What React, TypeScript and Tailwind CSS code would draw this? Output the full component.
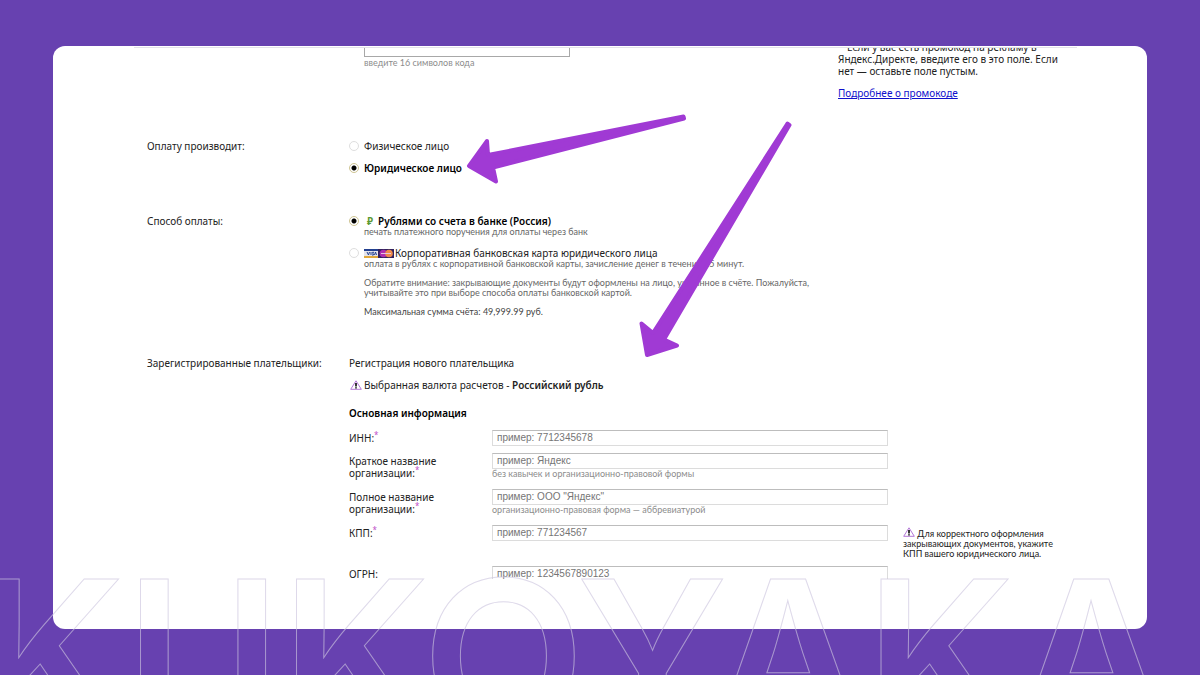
import { ReactNode } from 'react'
import clsx from 'clsx'

type RadioProps = {
    id: string
    name: string
    checked?: boolean
    icon?: ReactNode
    children: ReactNode
}

function RadioOption({ id, name, checked, icon, children }: RadioProps) {
    return (
        <div className="flex h-3 items-center">
            <input
                type="radio"
                id={id}
                name={name}
                defaultChecked={checked}
                className="mr-[5px] size-[10px] shrink-0 appearance-none rounded-full border border-[#dedede] bg-white checked:border-[#cfc593] checked:bg-[radial-gradient(circle,#000_2px,#fff_3px)]"
            />
            <label htmlFor={id} className={clsx('flex items-center whitespace-nowrap', checked && 'font-semibold text-black')}>
                {icon}
                {children}
            </label>
        </div>
    )
}

function WarningIcon() {
    return (
        <svg viewBox="0 0 12 10" className="inline-block h-[10px] w-3 shrink-0 align-baseline" aria-hidden="true">
            <path d="M6 0.8 L11.3 9.3 H0.7 Z" fill="#fff" stroke="#b377d6" strokeLinejoin="round" />
            <path d="M6 3 V6.4 M6 7.2 V8.6" stroke="#222" strokeWidth="1.8" />
        </svg>
    )
}

function BankCards() {
    return (
        <svg viewBox="0 0 30 9" className="mr-[1px] h-[9px] w-[30px] shrink-0" aria-hidden="true">
            <rect width="14" height="9" fill="#e4e4ec" />
            <rect width="14" height="2" fill="#23408f" />
            <rect y="7" width="14" height="2" fill="#e0a83c" />
            <path d="M3 3 L4.5 6 L5.5 3 M7 3 V6 M10 3.3 H8.5 L9.5 6 H8 M10.5 6 L11.5 3 L12.5 6" fill="none" stroke="#23408f" />
            <rect x="14" width="16" height="9" fill="#33235e" />
            <circle cx="19.5" cy="4.5" r="3.8" fill="#b02fb0" />
            <circle cx="25" cy="4.5" r="3.8" fill="#f08b4a" />
            <path d="M17 4.5 H27" stroke="#e8c6dc" />
        </svg>
    )
}

type FieldProps = {
    id: string
    label: ReactNode
    placeholder: string
    hint?: string
    required?: boolean
    className?: string
    children?: ReactNode
}

function Field({ id, label, placeholder, hint, required, className, children }: FieldProps) {
    return (
        <div className={clsx('flex items-start', className)}>
            <label htmlFor={id} className="w-[143px] shrink-0 pt-[2px]">
                {label}
                {required && <sup className="text-[8px] leading-none text-[#c050c8]">*</sup>}
            </label>
            <div className="w-[396px] shrink-0">
                <input
                    id={id}
                    placeholder={placeholder}
                    className="block h-4 w-full border border-[#dcdcdc] border-t-[#bdbdbd] bg-white px-1 pb-[1px] font-['Liberation_Sans',sans-serif] text-[10px] leading-3 placeholder:text-[#757575]"
                />
                {hint && <p className="font-[Lato,sans-serif] text-[9px] leading-[10px] text-[#8c8c8c]">{hint}</p>}
            </div>
            {children}
        </div>
    )
}

function Row({ title, className, children }: { title?: string; className?: string; children: ReactNode }) {
    return (
        <section className={clsx('flex items-start', className)}>
            <h2 className="w-[202px] shrink-0">{title}</h2>
            <div className="min-w-0 flex-1">{children}</div>
        </section>
    )
}

function Arrows() {
    return (
        <svg className="pointer-events-none absolute top-0 left-0 h-[400px] w-[800px]" viewBox="0 0 800 400" aria-hidden="true">
            <g fill="#a03ad4" stroke="#a03ad4" strokeWidth="4" strokeLinejoin="round">
                <path d="M683.5 116.5 L488 155 L487 141 L469 166 L496 181.5 L493 167.5 L684 118.5 Z" />
                <path d="M787.5 123.5 L653 333 L641.5 323.5 L647 355 L677 345.5 L664 339.5 L789.5 125 Z" />
            </g>
        </svg>
    )
}

export default function App() {
    return (
        <div className="relative min-h-screen overflow-hidden bg-[#6741b0] px-[53px] pt-[46px] pb-[46px]">
            <main className="rounded-xl bg-white pt-[1px] pb-[50px] font-['Noto_Sans',sans-serif] text-[10px] leading-3 text-[#222]">
                <div className="ml-[81px] mr-[70px] border-t border-[#e2e2e8]" />
                <div className="h-[531px] overflow-hidden pl-[94px]">
                    <div className="flex h-[92px] items-start overflow-hidden">
                        <div className="-mt-[10px] ml-[217px] w-[474px] shrink-0">
                            <input id="promo" aria-describedby="promo-hint" aria-label="Промокод" className="block h-[19px] w-[206px] border border-[#a8a8a8]" />
                            <p id="promo-hint" className="font-[Lato,sans-serif] text-[9px] leading-3 text-[#8c8c8c]">введите 16 символов кода</p>
                        </div>
                        <aside className="-mt-[7px] shrink-0">
                            <p>
                                <span className="text-[#2433c0]">•</span> &nbsp;Если у вас есть промокод на рекламу в
                                <br />
                                Яндекс.Директе, введите его в это поле. Если
                                <br />
                                нет — оставьте поле пустым.
                            </p>
                            <a href="#promo" className="mt-[10px] inline-block text-[#1010cc] underline">
                                Подробнее о промокоде
                            </a>
                        </aside>
                    </div>

                    <Row title="Оплату производит:">
                        <div className="flex flex-col gap-[10px]">
                            <RadioOption id="person" name="payer">Физическое лицо</RadioOption>
                            <RadioOption id="company" name="payer" checked>Юридическое лицо</RadioOption>
                        </div>
                    </Row>

                    <Row title="Способ оплаты:" className="mt-[41px]">
                        <RadioOption
                            id="bank"
                            name="method"
                            checked
                            icon={<span className="w-[14px] pl-[3px] text-[10px] font-bold text-[#5b9a32]">₽</span>}
                        >
                            Рублями со счета в банке (Россия)
                        </RadioOption>
                        <p className="pl-[15px] font-[Lato,sans-serif] text-[9px] leading-[10px] text-[#666]">печать платежного поручения для оплаты через банк</p>
                        <div className="mt-[10px]">
                            <RadioOption id="card" name="method" icon={<BankCards />}>
                                Корпоративная банковская карта юридического лица
                            </RadioOption>
                        </div>
                        <div className="pl-[15px] font-[Lato,sans-serif] text-[9px] leading-[10px] text-[#666]">
                            <p>оплата в рублях с корпоративной банковской карты, зачисление денег в течение 15 минут.</p>
                            <p className="mt-[9px]">
                                Обратите внимание: закрывающие документы будут оформлены на лицо, указанное в счёте. Пожалуйста,
                                <br />
                                учитывайте это при выборе способа оплаты банковской картой.
                            </p>
                            <p className="mt-[9px] text-[#444]">Максимальная сумма счёта: 49,999.99 руб.</p>
                        </div>
                    </Row>

                    <Row title="Зарегистрированные плательщики:" className="mt-10">
                        <p>Регистрация нового плательщика</p>
                        <p className="mt-[10px] flex items-center pl-[1px]">
                            <WarningIcon />
                            <span className="ml-[2px]">
                                Выбранная валюта расчетов - <b className="font-semibold">Российский рубль</b>
                            </span>
                        </p>
                        <h3 className="mt-4 font-semibold text-black">Основная информация</h3>
                        <form className="mt-[11px]">
                            <Field id="inn" label="ИНН:" placeholder="пример: 7712345678" required />
                            <Field
                                id="short-name"
                                label={<>Краткое название<br />организации:</>}
                                placeholder="пример: Яндекс"
                                hint="без кавычек и организационно-правовой формы"
                                required
                                className="mt-[7px] h-[29px]"
                            />
                            <Field
                                id="full-name"
                                label={<>Полное название<br />организации:</>}
                                placeholder={'пример: ООО "Яндекс"'}
                                hint="организационно-правовая форма — аббревиатурой"
                                required
                                className="mt-[7px] h-[29px]"
                            />
                            <Field id="kpp" label="КПП:" placeholder="пример: 771234567" required className="mt-[7px] h-[34px]">
                                <p className="ml-[15px] pt-[2px] font-[Lato,sans-serif] text-[9px] leading-[10px] whitespace-nowrap">
                                    <WarningIcon /> Для корректного оформления
                                    <br />
                                    закрывающих документов, укажите
                                    <br />
                                    КПП вашего юридического лица.
                                </p>
                            </Field>
                            <Field id="ogrn" label="ОГРН:" placeholder="пример: 1234567890123" className="mt-[7px]" />
                        </form>
                    </Row>
                </div>
            </main>

            <Arrows />

            {/* outlined brand name running off the bottom edge */}
            <div
                aria-hidden="true"
                className="pointer-events-none absolute top-[579px] -left-6 font-[Inter,sans-serif] text-[212px] leading-[154px] font-semibold whitespace-nowrap text-transparent [-webkit-text-stroke:1px_#cdc4dea6]"
            >
                KUKOYAKA
            </div>
        </div>
    )
}
